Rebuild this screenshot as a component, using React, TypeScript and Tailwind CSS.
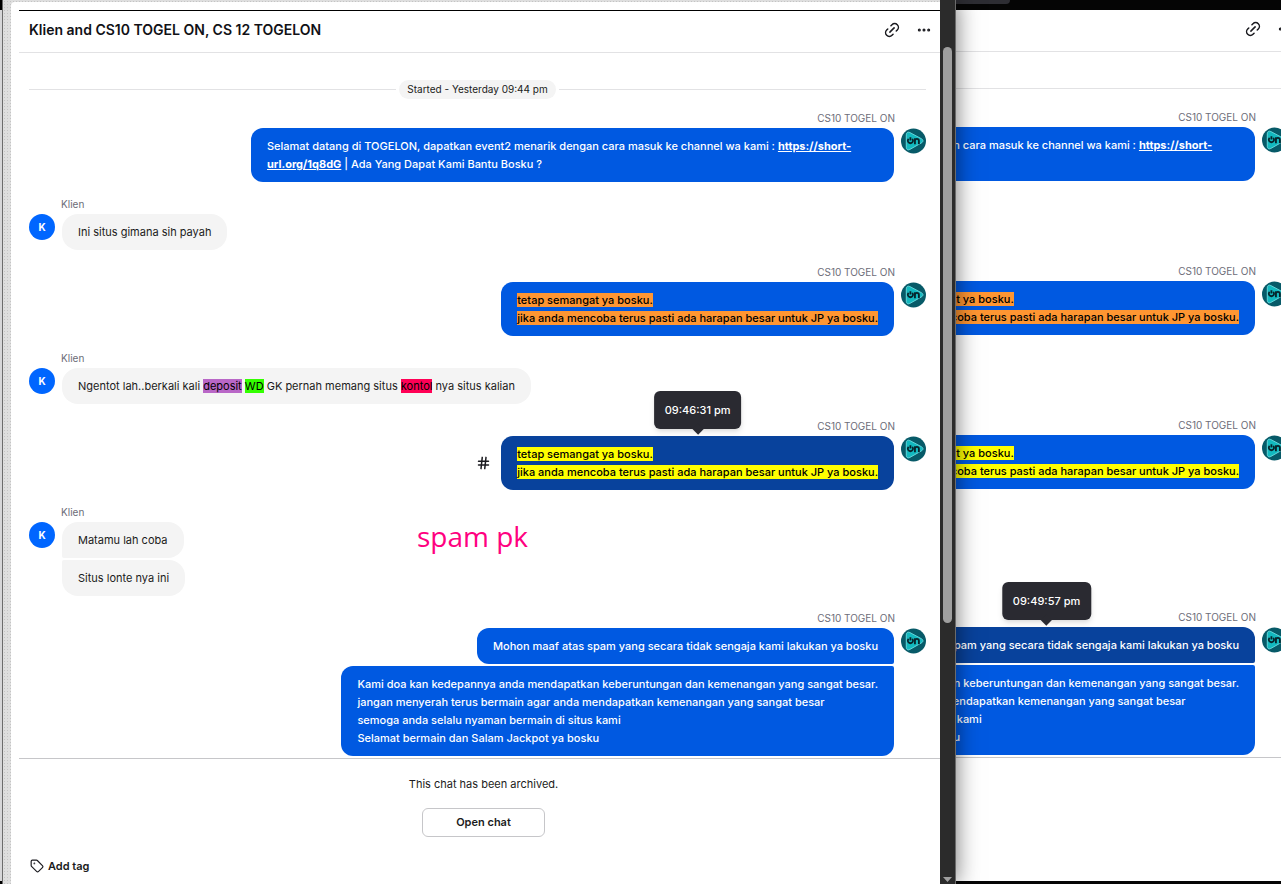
import { ReactNode } from 'react';
import { Ellipsis, Hash, Link2, Tag } from 'lucide-react';

// Types
interface Bubble {
  id: string;
  body: ReactNode;
}

interface MessageGroup {
  id: string;
  from: 'agent' | 'client';
  bubbles: Bubble[];
}

interface ConversationProps {
  hoveredId: string;
  hoveredTime: string;
  showHash?: boolean;
  // Left half sits under another window, so its content is left out
  covered?: boolean;
}

const spamText = (className: string) => (
  <>
    <mark className={className}>tetap semangat ya bosku.</mark>
    <br />
    <mark className={className}>
      jika anda mencoba terus pasti ada harapan besar untuk JP ya bosku.
    </mark>
  </>
);

const groups: MessageGroup[] = [
  {
    id: 'welcome',
    from: 'agent',
    bubbles: [
      {
        id: 'welcome-1',
        body: (
          <>
            Selamat datang di TOGELON, dapatkan event2 menarik dengan cara masuk
            ke channel wa kami :{' '}
            <a href="#channel" className="font-bold underline">
              https://short-url.org/1q8dG
            </a>{' '}
            | Ada Yang Dapat Kami Bantu Bosku ?
          </>
        ),
      },
    ],
  },
  {
    id: 'client-1',
    from: 'client',
    bubbles: [{ id: 'client-1-1', body: 'Ini situs gimana sih payah' }],
  },
  {
    id: 'spam-1',
    from: 'agent',
    bubbles: [{ id: 'spam-1-1', body: spamText('bg-[#ff9632] text-black') }],
  },
  {
    id: 'client-2',
    from: 'client',
    bubbles: [
      {
        id: 'client-2-1',
        body: (
          <>
            Ngentot lah..berkali kali{' '}
            <mark className="bg-[#b967c7]">deposit</mark>{' '}
            <mark className="bg-[#33ff00]">WD</mark> GK pernah memang situs{' '}
            <mark className="bg-[#ff0055]">kontol</mark> nya situs kalian
          </>
        ),
      },
    ],
  },
  {
    id: 'spam-2',
    from: 'agent',
    bubbles: [{ id: 'spam-2-1', body: spamText('bg-[#ffff00] text-black') }],
  },
  {
    id: 'client-3',
    from: 'client',
    bubbles: [
      { id: 'client-3-1', body: 'Matamu lah coba' },
      { id: 'client-3-2', body: 'Situs lonte nya ini' },
    ],
  },
  {
    id: 'apology',
    from: 'agent',
    bubbles: [
      {
        id: 'apology-1',
        body: 'Mohon maaf atas spam yang secara tidak sengaja kami lakukan ya bosku',
      },
      {
        id: 'apology-2',
        body: (
          <>
            Kami doa kan kedepannya anda mendapatkan keberuntungan dan
            kemenangan yang sangat besar.
            <br />
            jangan menyerah terus bermain agar anda mendapatkan kemenangan yang
            sangat besar
            <br />
            semoga anda selalu nyaman bermain di situs kami
            <br />
            Selamat bermain dan Salam Jackpot ya bosku
          </>
        ),
      },
    ],
  },
];

function AgentAvatar() {
  return (
    <svg viewBox="0 0 26 26" className="h-[26px] w-[25px] shrink-0" aria-hidden="true">
      <circle cx="13" cy="13" r="13" fill="#075a68" />
      <path
        d="M5.500 6.600c0-2.400 1.600-3.400 3.700-2.400l12 6.400c2.200 1.200 2.200 3.200 0 4.400l-12 6.800c-2.100 1.100-3.700.1-3.700-2.300z"
        fill="#12b9bf"
        stroke="#6fdfe2"
        strokeWidth="0.9"
      />
      <path
        d="M7.900 10.700a2.700 2.700 0 1 0 3.800 0M9.800 9v3.400M14.500 16.300v-6.200M14.500 12.700c0-2.500 4.100-2.500 4.100 0v3.600"
        fill="none"
        stroke="#06242b"
        strokeWidth="1.9"
      />
    </svg>
  );
}

function Tooltip({ children }: { children: ReactNode }) {
  return (
    <div
      role="tooltip"
      className="absolute bottom-full left-1/2 mb-[7px] -translate-x-1/2 whitespace-nowrap rounded-md bg-[#2a2a31] px-[11px] py-[10px] font-medium text-white shadow-md"
    >
      {children}
      <span className="absolute -bottom-1 left-1/2 -ml-1 size-2 rotate-45 bg-[#2a2a31]" />
    </div>
  );
}

function AgentGroup({
  group,
  hoveredId,
  hoveredTime,
  showHash,
}: { group: MessageGroup } & ConversationProps) {
  return (
    <article className="flex flex-col pt-[14px]">
      <span className="mb-0.5 mr-[31px] self-end text-[10px] leading-4 text-[#6d6d78]">
        CS10 TOGEL ON
      </span>
      <div className="flex justify-end gap-[7px]">
        <div className="flex flex-col items-end gap-0.5">
          {group.bubbles.map((bubble, index) => {
            const isHovered = bubble.id === hoveredId;
            const isFirst = index === 0;
            const isLast = index === group.bubbles.length - 1;
            return (
              <div
                key={bubble.id}
                className={`relative max-w-[643px] rounded-l-xl px-4 py-[9px] font-medium text-white ${
                  isFirst ? 'rounded-tr-xl' : 'rounded-tr-xs'
                } ${isLast ? 'rounded-br-xl' : 'rounded-br-xs'} ${
                  isHovered ? 'bg-[#08429c]' : 'bg-[#0059e1]'
                }`}
              >
                {bubble.body}
                {isHovered && <Tooltip>{hoveredTime}</Tooltip>}
                {isHovered && showHash && (
                  <Hash
                    className="absolute right-full top-1/2 mr-[10px] size-[15px] -translate-y-1/2 text-[#1b1b20]"
                    strokeWidth={2.4}
                  />
                )}
              </div>
            );
          })}
        </div>
        <AgentAvatar />
      </div>
    </article>
  );
}

function ClientGroup({
  group,
  covered,
}: {
  group: MessageGroup;
  covered?: boolean;
}) {
  return (
    <article className="flex flex-col pt-[14px]">
      <span className="mb-0.5 ml-8 h-4 text-[10px] leading-4 text-[#6d6d78]">
        {!covered && 'Klien'}
      </span>
      <div className="flex items-start gap-[7px]">
        <span className="flex size-[26px] shrink-0 items-center justify-center rounded-full bg-[#0066ff] text-[10px] font-bold text-white">
          {!covered && 'K'}
        </span>
        <div className="flex flex-col items-start gap-0.5">
          {group.bubbles.map((bubble, index) => (
            <div
              key={bubble.id}
              className={`min-h-9 rounded-r-2xl bg-[#f4f4f4] px-4 py-[9px] text-[#1b1b20] ${
                index === 0 ? 'rounded-tl-2xl' : 'rounded-tl-xs'
              } ${
                index === group.bubbles.length - 1
                  ? 'rounded-bl-2xl'
                  : 'rounded-bl-xs'
              }`}
            >
              {!covered && bubble.body}
            </div>
          ))}
        </div>
      </div>
    </article>
  );
}

function Conversation(props: ConversationProps) {
  const { covered } = props;

  return (
    <div className="flex min-h-0 w-full flex-1 flex-col">
      <header className="flex h-[42px] shrink-0 items-center justify-between border-b border-[#e2e2e4] pb-1 pl-[10px] pr-2">
        <h1 className="text-[14px] font-semibold text-[#111116]">
          {!covered && 'Klien and CS10 TOGEL ON, CS 12 TOGELON'}
        </h1>
        <div className="flex items-center gap-[15px] text-[#1b1b20]">
          <button type="button" aria-label="Copy link">
            <Link2 className="size-[18px] -rotate-45" strokeWidth={2} />
          </button>
          <button type="button" aria-label="More options">
            <Ellipsis className="size-4" strokeWidth={2.6} />
          </button>
        </div>
      </header>
      <section className="flex min-h-0 flex-1 flex-col overflow-hidden pl-[10px] pr-[14px]">
        <div className="-mb-[3px] mt-[27px] flex h-[19px] shrink-0 items-center gap-[3px]">
          <hr className="flex-1 border-[#e2e2e4]" />
          {!covered && (
            <span className="rounded-full bg-[#f4f4f4] px-2 text-[10px] leading-[19px] text-[#1b1b20]">
              Started - Yesterday 09:44 pm
            </span>
          )}
          <hr className="flex-1 border-[#e2e2e4]" />
        </div>
        {groups.map(group =>
          group.from === 'agent' ? (
            <AgentGroup key={group.id} group={group} {...props} />
          ) : (
            <ClientGroup key={group.id} group={group} covered={covered} />
          )
        )}
      </section>
      <footer className="flex min-h-[126px] shrink-0 flex-col items-center border-t border-[#c6c6c9] pl-2 pt-4 text-[#1b1b20]">
        {!covered && (
          <>
            <p>This chat has been archived.</p>
            <button
              type="button"
              className="mt-[15px] w-[123px] rounded-md border border-[#c6c6c9] pb-[5px] pt-1 font-semibold"
            >
              Open chat
            </button>
            <button
              type="button"
              className="ml-[3px] mt-5 flex items-center gap-1 self-start font-semibold"
            >
              <Tag className="size-[14px]" strokeWidth={2} />
              Add tag
            </button>
          </>
        )}
      </footer>
    </div>
  );
}

function ScrollTrack() {
  return (
    <div className="flex w-4 shrink-0 flex-col items-center border-r border-[#6b6b6b] bg-[#2b2b2b] pb-[2px] pt-[47px]">
      <div className="h-[69%] w-[9px] rounded-full bg-[#9f9f9f]" />
      <svg viewBox="0 0 9 5" className="mt-auto h-[5px] w-[9px]">
        <path d="M0 0h9L4.500 5z" fill="#9f9f9f" />
      </svg>
    </div>
  );
}

function App() {
  return (
    <main className="flex h-screen w-full overflow-hidden bg-[#050505] font-[Inter,sans-serif] text-[11px] leading-[18px]">
      {/* Front window */}
      <div className="relative z-10 flex min-w-0 flex-1 bg-[#d9d9d9] shadow-[0_0_22px_rgba(0,0,0,0.55)]">
        <div className="flex w-[3px] shrink-0 flex-col border-r border-[#6b6b6b] bg-[#d6d6d8]">
          <span className="h-[10px] bg-black" />
          <span className="mt-auto h-[3px] bg-black" />
        </div>
        <div className="flex min-w-0 flex-1 flex-col bg-[#dedede] bg-[radial-gradient(#c4c4c4_1px,transparent_1px)] bg-[size:3px_3px] pl-2 pt-[2px]">
          <div className="relative flex min-h-0 flex-1 flex-col rounded-tl bg-white pl-2 pt-2">
            <div className="flex min-h-0 flex-1 flex-col border-t border-black">
              <Conversation
                hoveredId="spam-2-1"
                hoveredTime="09:46:31 pm"
                showHash
              />
            </div>
            {/* Note written on top of the chat */}
            <p className="absolute left-[406px] top-[514px] font-['Open_Sans',sans-serif] text-[28px] leading-10 text-[#ff0080]">
              spam pk
            </p>
          </div>
        </div>
        <ScrollTrack />
      </div>

      {/* Window behind, mostly covered */}
      <div className="flex w-[325px] shrink-0 flex-col overflow-hidden pb-[3px]">
        <div className="h-[10px] shrink-0">
          <div className="h-1 w-[54px] rounded-br-md bg-[#2d2d33]" />
        </div>
        <div className="flex min-h-0 flex-1 justify-end overflow-hidden bg-white">
          <div className="-mb-0.5 -mr-5 flex w-[921px] shrink-0">
            <Conversation
              hoveredId="apology-1"
              hoveredTime="09:49:57 pm"
              covered
            />
          </div>
        </div>
      </div>
    </main>
  );
}

export default App;
